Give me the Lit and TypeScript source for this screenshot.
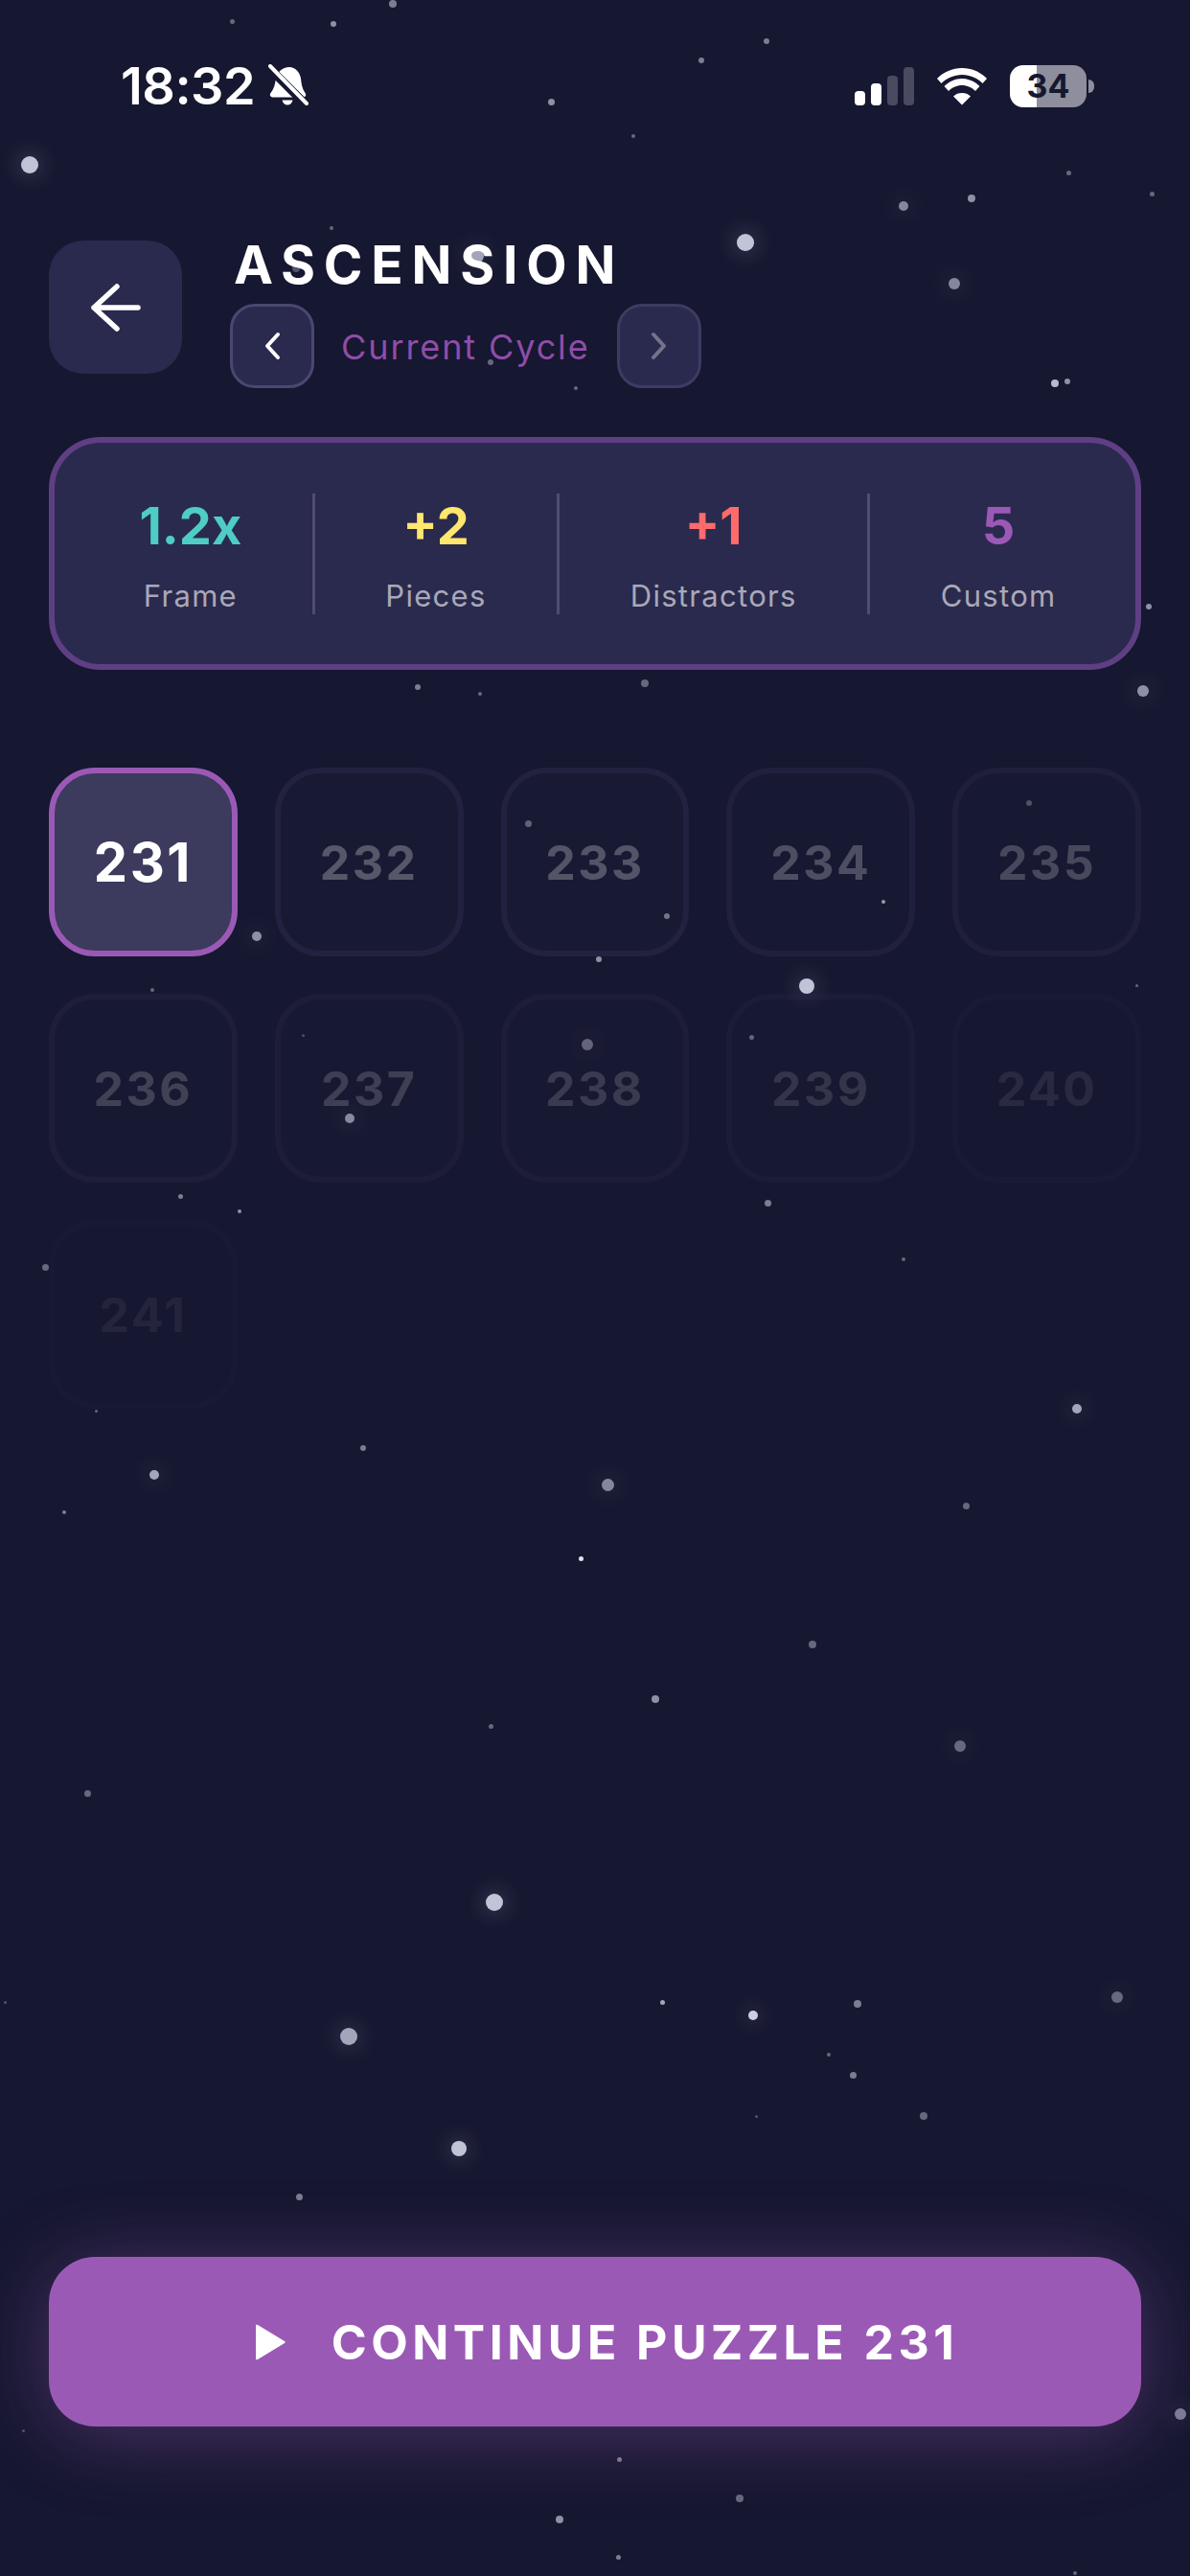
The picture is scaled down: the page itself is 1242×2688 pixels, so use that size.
import { LitElement, css, html, svg } from 'lit';
import { customElement } from 'lit/decorators.js';

// x, y, radius, opacity. Stars with r >= 5 get a glow.
const STARS: [number, number, number, number][] = [
  [410, 4, 4, 0.5], [242, 22, 2.5, 0.4], [348, 25, 3, 0.6], [800, 43, 3, 0.5], [732, 63, 3, 0.5],
  [575, 106, 3.5, 0.6], [661, 142, 2, 0.4], [31, 172, 9, 0.85], [1115, 180, 2.5, 0.4], [1202, 202, 2.5, 0.4],
  [1014, 207, 4, 0.6], [943, 215, 5, 0.55], [346, 238, 2, 0.4], [778, 253, 9, 0.85], [497, 267, 8, 0.7],
  [996, 296, 6, 0.55], [309, 280, 4, 0.3], [512, 378, 3, 0.4], [601, 405, 2, 0.4], [1101, 400, 4, 0.8],
  [1114, 398, 3, 0.6], [1199, 633, 3, 0.6], [436, 717, 3, 0.5], [501, 724, 2, 0.4], [673, 713, 4, 0.4],
  [1193, 721, 6, 0.6], [268, 977, 5, 0.6], [551, 859, 3.5, 0.4], [625, 1001, 3, 0.6], [159, 1033, 2, 0.4],
  [1074, 838, 3, 0.3], [696, 956, 3, 0.5], [922, 941, 2, 0.7], [842, 1029, 8, 0.85], [1186, 1028, 1.5, 0.4],
  [613, 1090, 6, 0.4], [784, 1082, 2.5, 0.4], [316, 1080, 1.5, 0.3], [365, 1167, 5, 0.6], [188, 1248, 2.5, 0.5],
  [250, 1264, 2, 0.6], [801, 1255, 3.5, 0.5], [47, 1322, 3.5, 0.4], [943, 1314, 2, 0.4], [100, 1472, 1.5, 0.4],
  [379, 1511, 3, 0.5], [161, 1539, 5, 0.7], [634, 1549, 6.5, 0.55], [1124, 1470, 5, 0.7], [1008, 1571, 3.5, 0.4],
  [67, 1578, 2, 0.5], [606, 1626, 2.5, 1], [848, 1716, 4, 0.4], [684, 1773, 4, 0.6], [512, 1801, 2.5, 0.4],
  [1002, 1822, 6, 0.4], [91, 1871, 3.5, 0.4], [516, 1985, 9, 0.85], [5, 2089, 1.5, 0.3], [691, 2089, 2.5, 0.7],
  [786, 2103, 5, 0.9], [895, 2091, 4, 0.5], [1166, 2084, 6, 0.4], [364, 2125, 9, 0.7], [865, 2144, 2, 0.4],
  [890, 2165, 3.5, 0.5], [964, 2208, 4, 0.4], [789, 2208, 1.5, 0.3], [479, 2242, 8, 0.85], [312, 2292, 3.5, 0.5],
  [1232, 2519, 6, 0.5], [24, 2536, 1.5, 0.3], [646, 2566, 2.5, 0.5], [772, 2607, 4, 0.4], [584, 2629, 4, 0.6],
  [645, 2668, 2.5, 0.5], [1122, 2685, 2, 0.4],
];

const STATS = [
  { value: '1.2x', label: 'Frame', color: '#4ecdc4' },
  { value: '+2', label: 'Pieces', color: '#ffe66d' },
  { value: '+1', label: 'Distractors', color: '#ff6b6b' },
  { value: '5', label: 'Custom', color: '#9b59b6' },
];

const PUZZLES = [
  { n: 231, o: 1 }, { n: 232, o: 0.55 }, { n: 233, o: 0.52 }, { n: 234, o: 0.47 }, { n: 235, o: 0.42 },
  { n: 236, o: 0.36 }, { n: 237, o: 0.34 }, { n: 238, o: 0.3 }, { n: 239, o: 0.25 }, { n: 240, o: 0.16 },
  { n: 241, o: 0.12 },
];

const backIcon = svg`<path d="M49 25H3M27 3 3 25l24 22" fill="none" stroke="#fff" stroke-width="5.5" stroke-linecap="round" stroke-linejoin="round"/>`;
const wifiIcon = svg`
  <path d="M27 1C17 1 8 5 1 12l4.500 5C11 11.500 19 8 27 8s16 3.500 21.500 9l4.500-5C46 5 37 1 27 1Z"/>
  <path d="M27 12c-7 0-13.500 3-18.500 8l4.500 5c3.500-3.500 8.500-6 14-6s10.500 2.500 14 6l4.500-5c-5-5-11.500-8-18.500-8Z"/>
  <path d="M27 27c-3.500 0-6.500 1-9 3.500l9 9 9-9c-2.500-2.500-5.500-3.500-9-3.500Z"/>`;
const bellIcon = svg`
  <path d="M22 3c6 0 11 5 12 12 .6 6 1.500 11 4.500 15 1.500 2 .5 4.500-2 4.500H5c-3 0-4-2.500-2.500-4.500C6 26 7 21 8 15 9 8 15 3 22 3Z" fill="#fff"/>
  <path d="M14.500 37.500h11c-.5 3-3 5-5.500 5s-5-2-5.500-5Z" fill="#fff"/>
  <path d="M0 3 38 41" stroke="#161730" stroke-width="9"/>
  <path d="M2 2l38 39" stroke="#fff" stroke-width="4" stroke-linecap="round"/>`;

@customElement('app-root')
export class AppRoot extends LitElement {
  static styles = css`
    :host {
      display: flex;
      flex-direction: column;
      position: relative;
      width: 1242px;
      height: 2688px;
      overflow: hidden;
      background: #161730;
      color: #fff;
      font-family: Inter, 'Liberation Sans', sans-serif;
    }
    .stars {
      position: absolute;
      inset: 0;
    }
    .star {
      position: absolute;
      border-radius: 50%;
      background: #dfe3f5;
    }
    .star.glow {
      box-shadow: 0 0 24px 2px rgba(223, 227, 245, 0.3);
    }
    .content {
      position: relative;
      flex: 1;
      display: flex;
      flex-direction: column;
      padding: 0 51px 156px;
    }
    .status {
      display: flex;
      align-items: center;
      height: 180px;
      margin: 0 49px 0 75px;
    }
    .time {
      font-size: 54px;
      font-weight: 600;
      line-height: 1;
      letter-spacing: -0.5px;
    }
    .bell {
      width: 42px;
      height: 46px;
      margin-left: 14px;
    }
    .status-right {
      display: flex;
      align-items: center;
      margin-left: auto;
    }
    .signal {
      display: flex;
      align-items: flex-end;
      gap: 6px;
      height: 40px;
    }
    .signal i {
      width: 11px;
      border-radius: 4px;
      background: #4a4a60;
    }
    .signal i.on {
      background: #fff;
    }
    .wifi {
      width: 54px;
      height: 40px;
      margin: 0 23px;
      fill: #fff;
    }
    .battery {
      display: flex;
      align-items: center;
      justify-content: center;
      width: 80px;
      height: 44px;
      border-radius: 14px;
      background: linear-gradient(90deg, #fff 35%, #8e8e9c 35%);
      color: #161730;
      font-size: 34px;
      font-weight: 700;
      line-height: 1;
    }
    .nub {
      width: 6px;
      height: 14px;
      margin-left: 2px;
      border-radius: 0 7px 7px 0;
      background: #8e8e9c;
    }
    .header {
      display: flex;
      align-items: flex-start;
      gap: 50px;
      margin-top: 71px;
    }
    .back {
      display: flex;
      align-items: center;
      justify-content: center;
      width: 139px;
      height: 139px;
      border-radius: 36px;
      background: #2a2a4e;
    }
    .back svg {
      width: 52px;
      height: 50px;
    }
    .title {
      margin: 0 0 16px 4px;
      font-size: 55px;
      font-weight: 700;
      line-height: 50px;
      letter-spacing: 8.800px;
    }
    .cycle {
      display: flex;
      align-items: center;
      gap: 28px;
    }
    .cycle-btn {
      display: flex;
      align-items: center;
      justify-content: center;
      box-sizing: border-box;
      width: 88px;
      height: 88px;
      border: 3px solid #4a4870;
      border-radius: 26px;
      background: #2a2a4e;
    }
    .cycle-btn.off {
      border-color: #3d3b62;
    }
    .cycle-btn svg {
      width: 20px;
      height: 30px;
    }
    .cycle-label {
      position: relative;
      top: 1px;
      font-size: 36px;
      line-height: 1;
      letter-spacing: 1.900px;
      color: #8e4ea8;
    }
    .stats {
      display: flex;
      align-items: center;
      box-sizing: border-box;
      height: 243px;
      margin-top: 51px;
      padding: 0 9px 0 15px;
      border: 6px solid #5f3f83;
      border-radius: 54px;
      background: #2a2a4e;
    }
    .stat {
      flex: 1 1 auto;
      display: flex;
      flex-direction: column;
      align-items: center;
      gap: 24px;
      padding-top: 4px;
    }
    .stat-value {
      font-size: 54px;
      font-weight: 700;
      line-height: 60px;
    }
    .stat-label {
      font-size: 31px;
      line-height: 38px;
      letter-spacing: 1.300px;
      color: #a9a8b8;
    }
    .divider {
      flex: none;
      width: 3px;
      height: 126px;
      background: #4f4e70;
    }
    .grid {
      display: grid;
      grid-template-columns: repeat(5, 1fr);
      gap: 39px;
      margin-top: 102px;
    }
    .cell {
      display: flex;
      align-items: center;
      justify-content: center;
      box-sizing: border-box;
      height: 197px;
      border: 6px solid #2d2b4e;
      border-radius: 48px;
      background: rgba(45, 43, 78, 0.2);
      font-size: 50px;
      font-weight: 700;
      letter-spacing: 2.500px;
      color: rgba(255, 255, 255, 0.5);
    }
    .cell.active {
      border-color: #9b59b6;
      background: #3c3a5d;
      font-size: 56px;
      color: #fff;
    }
    .cta {
      display: flex;
      align-items: center;
      justify-content: center;
      gap: 47px;
      height: 177px;
      margin-top: auto;
      padding-left: 24px;
      border-radius: 48px;
      background: #9b59b6;
      box-shadow: 0 8px 80px rgba(155, 89, 182, 0.4);
      font-size: 50px;
      font-weight: 700;
      letter-spacing: 4.500px;
    }
    .cta svg {
      width: 33px;
      height: 40px;
    }
  `;

  render() {
    return html`
      <div class="stars">
        ${STARS.map(
          ([x, y, r, o]) => html`<span
            class="star ${r >= 5 ? 'glow' : ''}"
            style="left:${x - r}px;top:${y - r}px;width:${r * 2}px;height:${r * 2}px;opacity:${o}"
          ></span>`,
        )}
      </div>
      <div class="content">
        <div class="status">
          <span class="time">18:32</span>
          <svg class="bell" viewBox="0 0 42 46">${bellIcon}</svg>
          <div class="status-right">
            <div class="signal">
              <i class="on" style="height:15px"></i>
              <i class="on" style="height:23px"></i>
              <i style="height:31px"></i>
              <i style="height:40px"></i>
            </div>
            <svg class="wifi" viewBox="0 0 54 40">${wifiIcon}</svg>
            <div class="battery">34</div>
            <div class="nub"></div>
          </div>
        </div>

        <div class="header">
          <div class="back">
            <svg viewBox="0 0 52 50">${backIcon}</svg>
          </div>
          <div>
            <h1 class="title">ASCENSION</h1>
            <div class="cycle">
              <div class="cycle-btn">
                <svg viewBox="0 0 20 30">
                  <path d="M16 3 5 15l11 12" fill="none" stroke="#fff" stroke-width="4" stroke-linecap="round" stroke-linejoin="round" />
                </svg>
              </div>
              <span class="cycle-label">Current Cycle</span>
              <div class="cycle-btn off">
                <svg viewBox="0 0 20 30">
                  <path d="M4 3l11 12L4 27" fill="none" stroke="#74738a" stroke-width="4" stroke-linecap="round" stroke-linejoin="round" />
                </svg>
              </div>
            </div>
          </div>
        </div>

        <div class="stats">
          ${STATS.map(
            (s, i) => html`
              ${i > 0 ? html`<div class="divider"></div>` : ''}
              <div class="stat">
                <div class="stat-value" style="color:${s.color}">${s.value}</div>
                <div class="stat-label">${s.label}</div>
              </div>
            `,
          )}
        </div>

        <div class="grid">
          ${PUZZLES.map(
            (p) => html`<div class="cell ${p.o === 1 ? 'active' : ''}" style="opacity:${p.o}">${p.n}</div>`,
          )}
        </div>

        <div class="cta">
          <svg viewBox="0 0 33 40">
            <path d="M3 2 31 19c1 .6 1 1.400 0 2L3 38c-1 .6-2 0-2-1V3c0-1 1-1.600 2-1Z" fill="#fff" />
          </svg>
          <span>CONTINUE PUZZLE 231</span>
        </div>
      </div>
    `;
  }
}
